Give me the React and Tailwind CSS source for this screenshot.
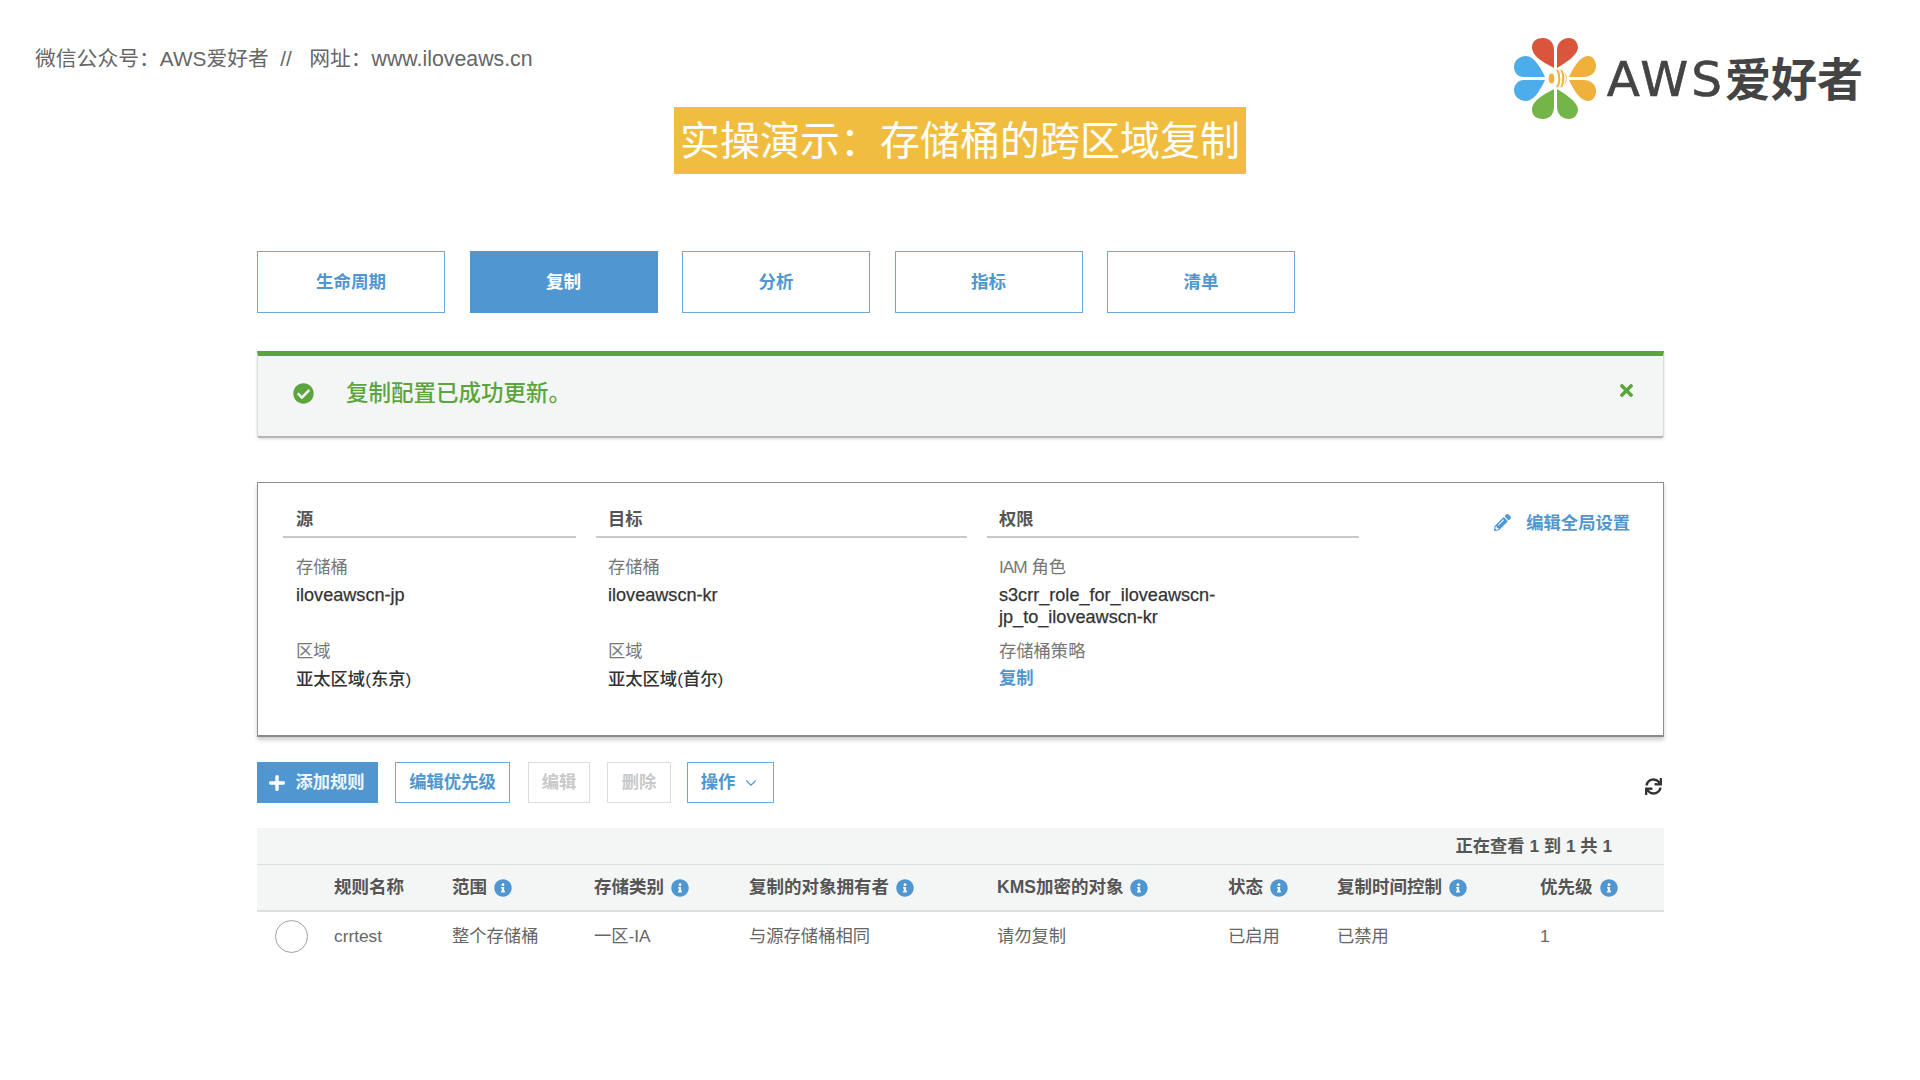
import React from 'react'
import { FaCheckCircle, FaTimes, FaPencilAlt, FaPlus, FaInfoCircle, FaSync } from 'react-icons/fa'
import { ChevronDown } from 'lucide-react'

const font = "font-['Liberation_Sans','Noto_Sans_CJK_SC',sans-serif]"

function Logo() {
    return (
        <div className="flex items-center mt-[38px] mr-[57px] h-[81px]">
            <svg width="82" height="81" viewBox="0 0 82 81" className="shrink-0">
                <g fill="#d9563c">
                    <path d="M40 30C31 25 18 19 18 9C18 3 23 0 29 0C36 0 40 5 40 12Z" />
                    <path d="M43 30L43 12C43 5 48 0 55 0C60 0 64 4 64 10C63 18 51 25 43 30Z" />
                </g>
                <g fill="#74b54a">
                    <path d="M40 51C31 56 18 62 18 72C18 78 23 81 29 81C36 81 40 76 40 69Z" />
                    <path d="M43 51L43 69C43 76 48 81 55 81C60 81 64 77 64 71C63 63 51 56 43 51Z" />
                </g>
                <g fill="#4dacea">
                    <path d="M31 39L10 39C4 39 0 35 0 29C0 22 6 18 12 18C20 18 27 30 31 39Z" />
                    <path d="M31 42L10 42C4 42 0 47 0 52C0 59 6 63 12 63C20 63 27 51 31 42Z" />
                </g>
                <g fill="#efb03c">
                    <path d="M55 39C59 30 66 18 74 18C79 18 82 23 82 28C82 35 76 39 70 39Z" />
                    <path d="M55 42C59 51 66 63 74 63C79 63 82 58 82 53C82 46 76 42 70 42Z" />
                    <ellipse cx="37.5" cy="40.5" rx="2.8" ry="5" />
                    <path d="M42 32C45 36 45 45 42 49L44 49.500C47 45 47 36 44 31.500Z" />
                    <path d="M46 31.500C49 36 49 45 46 49.500L48.500 48.500C51 44 51 37 48.500 32.500Z" />
                    <path d="M50 33.500C52.500 37 52.500 44 50 47.500C53.500 45 53.500 36 50 33.500Z" />
                </g>
            </svg>
            <div className="ml-[11px] text-[#444444] leading-none whitespace-nowrap">
                <span className="tracking-[3px] text-[48.500px] font-['DejaVu_Sans',sans-serif] [-webkit-text-stroke:0.6px]">AWS</span>
                <span className="text-[46px] font-bold font-['Noto_Sans_CJK_SC',sans-serif]">爱好者</span>
            </div>
        </div>
    )
}

function Tab({ label, active }) {
    return (
        <div className={active
            ? "w-[188px] h-[62px] flex items-center justify-center bg-[#5097d1] text-white text-[17.500px] font-bold"
            : "w-[188px] h-[62px] flex items-center justify-center bg-white border border-[#6ea9da] text-[#5097d1] text-[17.500px] font-bold"}>
            {label}
        </div>
    )
}

function Field({ label, children, className }) {
    return (
        <div className={className}>
            <div className="text-[17.300px] leading-[22px] text-[#777777]">{label}</div>
            <div className="mt-[6px] text-[17.300px] leading-[22px] text-[#333333] font-medium">{children}</div>
        </div>
    )
}

function Latin({ children }) {
    return <span className="text-[18.100px] [-webkit-text-stroke:0.25px]">{children}</span>
}

function InfoColumn({ title, width, pad, children }) {
    return (
        <div className={width}>
            <div className={`${pad} h-[40px] pt-[6px] border-b-2 border-[#c9c9c9] text-[#555555] text-[17.300px] leading-[30px] font-bold`}>{title}</div>
            <div className={`${pad} pt-[18px]`}>{children}</div>
        </div>
    )
}

function HeadCell({ label, info = true }) {
    return (
        <div className="flex items-center gap-[7px] text-[#555555] text-[17.500px] font-bold whitespace-nowrap">
            {label}
            {info && <FaInfoCircle className="text-[#5097d1] text-[18px]" />}
        </div>
    )
}

function App() {
    return (
        <div className={`${font} w-[1920px] h-[1080px] bg-white overflow-hidden`}>
            <div className="flex justify-between items-start h-[107px]">
                <div className="mt-[45px] ml-[35px] text-[20.800px] leading-[28px] text-[#666666] whitespace-nowrap">
                    微信公众号：AWS爱好者&nbsp;&nbsp;//&nbsp;&nbsp;&nbsp;网址：<span className="text-[21.300px]">www.iloveaws.cn</span>
                </div>
                <Logo />
            </div>

            <div className="flex justify-center">
                <div className="w-[572px] h-[67px] flex items-center justify-center bg-[#f0bd41] text-white text-[40px] whitespace-nowrap">
                    实操演示：存储桶的跨区域复制
                </div>
            </div>

            <div className="ml-[257px] w-[1407px]">
                <div className="mt-[77px] flex gap-[24.500px]">
                    <Tab label="生命周期" />
                    <Tab label="复制" active />
                    <Tab label="分析" />
                    <Tab label="指标" />
                    <Tab label="清单" />
                </div>

                <div className="mt-[38px] h-[87px] bg-[#f4f6f5] border-t-[5px] border-t-[#5aa53c] border-x border-x-[#dcdcdc] border-b-2 border-b-[#b5b5b5] rounded-b-[3px] flex items-start pl-[35px] pr-[27px] shadow-[0_1px_3px_rgba(0,0,0,0.15)]">
                    <FaCheckCircle className="mt-[27px] text-[#5aa53c] text-[21px]" />
                    <div className="ml-[32px] mt-[23px] text-[#5aa53c] text-[22.500px] leading-[30px] font-medium">复制配置已成功更新。</div>
                    <FaTimes className="ml-auto mt-[25px] text-[#5aa53c] text-[19px]" />
                </div>

                <div className="mt-[44px] h-[255px] border border-[#8f8f8f] border-b-2 border-b-[#8a8a8a] shadow-[0_3px_4px_rgba(0,0,0,0.2)] flex items-start pl-[25px] pt-[15px] gap-[20px]">
                    <InfoColumn title="源" width="w-[293px]" pad="pl-[13px]">
                        <Field label="存储桶"><Latin>iloveawscn-jp</Latin></Field>
                        <Field label="区域" className="mt-[34px]">亚太区域(东京)</Field>
                    </InfoColumn>
                    <InfoColumn title="目标" width="w-[371px]" pad="pl-[12px]">
                        <Field label="存储桶"><Latin>iloveawscn-kr</Latin></Field>
                        <Field label="区域" className="mt-[34px]">亚太区域(首尔)</Field>
                    </InfoColumn>
                    <InfoColumn title="权限" width="w-[372px]" pad="pl-[12px]">
                        <Field label={<><span className="tracking-[-1px]">IAM</span> 角色</>}>
                            <Latin>s3crr_role_for_iloveawscn-<br />jp_to_iloveawscn-kr</Latin>
                        </Field>
                        <div className="mt-[12px] text-[17.300px] leading-[22px] text-[#777777]">存储桶策略</div>
                        <div className="mt-[5px] text-[17.300px] leading-[22px] text-[#5097d1] font-bold">复制</div>
                    </InfoColumn>
                    <div className="ml-auto mr-[33px] mt-[13px] flex items-center text-[#5097d1] text-[17.300px] font-bold">
                        <FaPencilAlt className="text-[17px] mr-[15px] -mt-[2px]" />
                        编辑全局设置
                    </div>
                </div>

                <div className="mt-[25px] h-[41px] flex items-center text-[17.300px] font-bold">
                    <div className="w-[121px] h-full flex items-center justify-center gap-[9px] bg-[#5097d1] text-[#eef5fb]">
                        <FaPlus className="text-[18px] text-white -ml-[2px]" />
                        添加规则
                    </div>
                    <div className="ml-[17px] w-[115px] h-full flex items-center justify-center border border-[#6ea9da] text-[#5097d1]">编辑优先级</div>
                    <div className="ml-[18px] w-[62px] h-full flex items-center justify-center border border-[#dddddd] text-[#c9c9c9]">编辑</div>
                    <div className="ml-[17px] w-[64px] h-full flex items-center justify-center border border-[#dddddd] text-[#c9c9c9]">删除</div>
                    <div className="ml-[16px] w-[87px] h-full flex items-center justify-center gap-[7px] border border-[#6ea9da] text-[#5097d1]">
                        操作
                        <ChevronDown className="w-[18px] h-[18px]" strokeWidth={1.500} />
                    </div>
                    <FaSync className="ml-auto mr-[2px] mt-[7px] text-[#333333] text-[17px]" />
                </div>

                <div className="mt-[25px] h-[37px] pt-[2px] bg-[#f4f6f5] border-b border-[#dedede] flex items-center justify-end pr-[52px] text-[#555555] text-[17.300px] font-bold">
                    正在查看 1 到 1 共 1
                </div>
                <div className="h-[47px] bg-[#f4f6f5] border-b-2 border-[#dedede] grid grid-cols-[77px_118px_142px_155px_248px_231px_109px_203px_1fr] items-center">
                    <div />
                    <HeadCell label="规则名称" info={false} />
                    <HeadCell label="范围" />
                    <HeadCell label="存储类别" />
                    <HeadCell label="复制的对象拥有者" />
                    <HeadCell label="KMS加密的对象" />
                    <HeadCell label="状态" />
                    <HeadCell label="复制时间控制" />
                    <HeadCell label="优先级" />
                </div>
                <div className="h-[50px] grid grid-cols-[77px_118px_142px_155px_248px_231px_109px_203px_1fr] items-center text-[#666666] text-[17.300px]">
                    <div className="pl-[18px]"><div className="w-[33px] h-[33px] mb-[2px] rounded-full border border-[#a0a0a0]" /></div>
                    <div>crrtest</div>
                    <div>整个存储桶</div>
                    <div>一区-IA</div>
                    <div>与源存储桶相同</div>
                    <div>请勿复制</div>
                    <div>已启用</div>
                    <div>已禁用</div>
                    <div>1</div>
                </div>
            </div>
        </div>
    )
}

export default App
